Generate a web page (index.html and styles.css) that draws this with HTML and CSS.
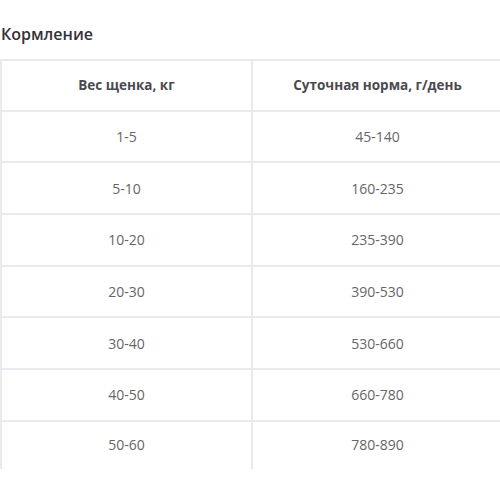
FILE: index.html
```html
<!DOCTYPE html>
<html lang="ru">
<head>
<meta charset="utf-8">
<link rel="stylesheet" href="styles.css">
</head>
<body>
<section class="feeding">
  <h2 class="title">Кормление</h2>
  <table class="feed-table">
    <thead>
      <tr><th>Вес щенка, кг</th><th>Суточная норма, г/день</th></tr>
    </thead>
    <tbody>
      <tr><td>1-5</td><td>45-140</td></tr>
      <tr><td>5-10</td><td>160-235</td></tr>
      <tr><td>10-20</td><td>235-390</td></tr>
      <tr><td>20-30</td><td>390-530</td></tr>
      <tr><td>30-40</td><td>530-660</td></tr>
      <tr><td>40-50</td><td>660-780</td></tr>
      <tr class="last"><td>50-60</td><td>780-890</td></tr>
    </tbody>
  </table>
</section>
</body>
</html>
```
FILE: styles.css
```css
html, body {
  margin: 0;
  padding: 0;
  background: #fff;
  overflow: hidden;
}
.feeding {
  padding-top: 23px;
  width: 504px;
  font-family: "Open Sans", "Liberation Sans", sans-serif;
}
.title {
  margin: 0 0 14px 1px;
  font-size: 16px;
  font-weight: 600;
  color: #333338;
  line-height: 22px;
}
.feed-table {
  width: 504px;
  border-collapse: collapse;
  table-layout: fixed;
}
.feed-table th,
.feed-table td {
  border: 2px solid #e9e9ee;
  text-align: center;
  height: 49.7px;
  padding: 0;
  font-size: 14px;
  color: #666;
}
.feed-table th {
  height: 48.5px;
  font-size: 13.5px;
  font-weight: 700;
  color: #4a4a4f;
}
.feed-table tr.last td {
  border-bottom: none;
  height: 46px;
  padding-bottom: 1px;
}
```
